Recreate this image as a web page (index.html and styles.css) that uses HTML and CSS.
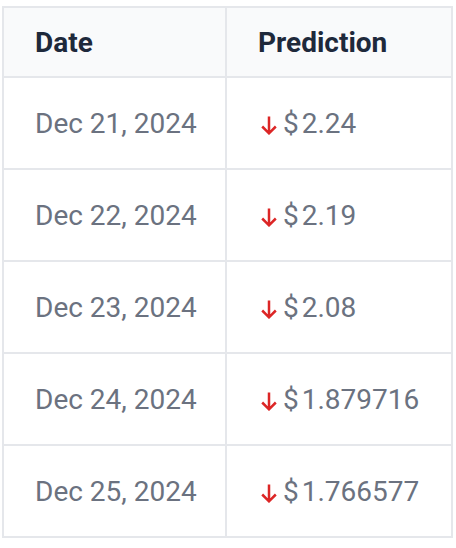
FILE: index.html
```html
<!DOCTYPE html>
<html>
<head>
<meta charset="utf-8">
<link rel="stylesheet" href="styles.css">
</head>
<body>
<div class="wrap">
<table class="pred">
  <thead>
    <tr><th class="c1">Date</th><th class="c2">Prediction</th></tr>
  </thead>
  <tbody>
    <tr><td>Dec 21, 2024</td><td><svg class="arrow" viewBox="0 0 16 19"><path d="M8 0.5V17.4M1.2 10.5L8 17.3L14.8 10.5"/></svg><span class="cur">$</span>2.24</td></tr>
    <tr><td>Dec 22, 2024</td><td><svg class="arrow" viewBox="0 0 16 19"><path d="M8 0.5V17.4M1.2 10.5L8 17.3L14.8 10.5"/></svg><span class="cur">$</span>2.19</td></tr>
    <tr><td>Dec 23, 2024</td><td><svg class="arrow" viewBox="0 0 16 19"><path d="M8 0.5V17.4M1.2 10.5L8 17.3L14.8 10.5"/></svg><span class="cur">$</span>2.08</td></tr>
    <tr><td>Dec 24, 2024</td><td><svg class="arrow" viewBox="0 0 16 19"><path d="M8 0.5V17.4M1.2 10.5L8 17.3L14.8 10.5"/></svg><span class="cur">$</span>1.879716</td></tr>
    <tr><td>Dec 25, 2024</td><td><svg class="arrow" viewBox="0 0 16 19"><path d="M8 0.5V17.4M1.2 10.5L8 17.3L14.8 10.5"/></svg><span class="cur">$</span>1.766577</td></tr>
  </tbody>
</table>
</div>
</body>
</html>
```
FILE: styles.css
```css
html, body { margin: 0; padding: 0; background: #fff; }
.wrap { padding: 6px 0 0 2px; }
.pred {
  border-collapse: collapse;
  table-layout: fixed;
  width: 451px;
  font-family: Roboto, "Liberation Sans", sans-serif;
  font-size: 28px;
}
.pred th, .pred td {
  border: 2px solid #e5e7eb;
  text-align: left;
  padding: 0 0 0 31px;
  white-space: nowrap;
}
.pred .c1 { width: 190px; }
.pred th {
  background: #f9fafb;
  color: #1e293b;
  font-weight: 700;
  height: 68px;
}
.pred td {
  color: #6b7280;
  font-weight: 400;
  height: 90px;
}
.arrow {
  width: 16px;
  height: 19px;
  vertical-align: -2px;
  margin: 0 6px 0 3px;
  fill: none;
  stroke: #dc2626;
  stroke-width: 2.5;
}
.cur { margin-right: 3px; }
```
